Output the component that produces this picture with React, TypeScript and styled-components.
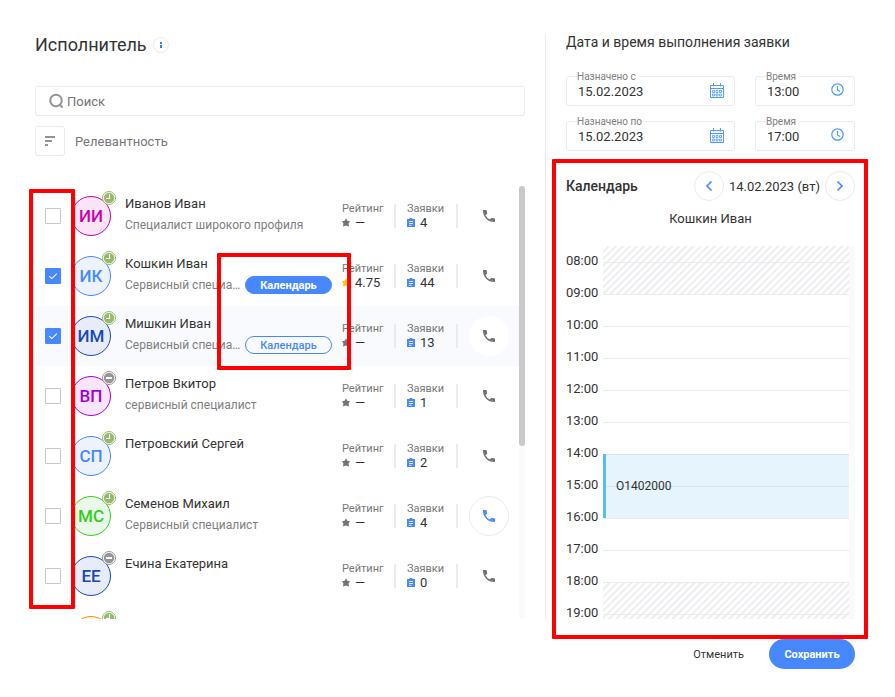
import React, { useState } from 'react';
import styled, { createGlobalStyle, css } from 'styled-components';

const blue = '#4788ff';
const line = '#ebebeb';
const red = '#ff0000';

const GlobalStyle = createGlobalStyle`
  *, *::before, *::after { box-sizing: border-box; }
  body {
    margin: 0;
    background: #fff;
    color: #333;
    font-family: Roboto, "Liberation Sans", sans-serif;
    font-size: 13px;
  }
  button, input { font: inherit; color: inherit; margin: 0; padding: 0; border: 0; background: none; }
  button { cursor: pointer; }
  h1, h2, h3, p, ul { margin: 0; padding: 0; }
  ul { list-style: none; }
  svg { display: block; flex: none; }
`;

const Page = styled.main`
  padding: 33px 40px 28px 35px;
`;

const Columns = styled.div`
  display: grid;
  grid-template-columns: minmax(420px, 1fr) 310px;
  column-gap: 20px;
`;

const Performers = styled.section`
  display: flex;
  flex-direction: column;
`;

const TitleRow = styled.div`
  display: flex;
  align-items: center;
  gap: 6px;
  height: 24px;
  margin-bottom: 29px;
`;

const Title = styled.h1`
  font-size: 18px;
  font-weight: 400;
  line-height: 24px;
`;

const InfoButton = styled.button`
  display: grid;
  place-items: center;
  width: 16px;
  height: 16px;
  border: 1px solid ${line};
  border-radius: 50%;
`;

const SearchBox = styled.label`
  display: flex;
  align-items: center;
  gap: 3px;
  height: 30px;
  padding: 0 13px;
  border: 1px solid ${line};
  border-radius: 3px;
`;

const SearchInput = styled.input`
  flex: 1;
  min-width: 0;
  font-size: 13px;
  outline: none;
  &::placeholder { color: #757575; opacity: 1; }
`;

const SortRow = styled.div`
  display: flex;
  align-items: center;
  gap: 10px;
  margin: 10px 0 30px;
  color: #777;
`;

const SortButton = styled.button`
  display: grid;
  place-items: center;
  width: 30px;
  height: 30px;
  border: 1px solid ${line};
  border-radius: 3px;
`;

const ListArea = styled.div`
  position: relative;
  display: grid;
  grid-template-columns: minmax(0, 1fr) 6px;
`;

const List = styled.ul`
  max-height: 433px;
  overflow-y: auto;
  scrollbar-width: none;
`;

const Track = styled.div`
  background: #fafafa;
`;

const Thumb = styled.div`
  height: 60%;
  border-radius: 3px;
  background: #c9c9c9;
`;

const Row = styled.li<{ $active?: boolean }>`
  display: flex;
  align-items: center;
  height: 60px;
  padding: 0 10px;
  background: ${p => (p.$active ? '#f9fafd' : 'transparent')};
`;

const Check = styled.input`
  appearance: none;
  flex: none;
  width: 16px;
  height: 16px;
  border: 1px solid #c6c6c6;
  border-radius: 1px;
  background: #fff;
  &:checked {
    border-color: ${blue};
    background: ${blue} url("data:image/svg+xml,%3Csvg xmlns='http://www.w3.org/2000/svg' viewBox='0 0 14 14'%3E%3Cpath d='M3.3 7.2l2.5 2.4 5-5' fill='none' stroke='white' stroke-width='1.1'/%3E%3C/svg%3E") center / 14px no-repeat;
  }
`;

const EmptyCheck = styled.span`
  width: 16px;
`;

const Avatar = styled.div<{ $color: string; $fill: string }>`
  position: relative;
  display: grid;
  place-items: center;
  flex: none;
  width: 40px;
  height: 40px;
  margin: 0 14px 0 10px;
  border: 1px solid ${p => p.$color};
  border-radius: 50%;
  background: ${p => p.$fill};
  color: ${p => p.$color};
  font-size: 17px;
  font-weight: 500;
`;

const Badge = styled.span`
  position: absolute;
  top: -6px;
  right: -6px;
`;

const Person = styled.div`
  flex: 1;
  min-width: 0;
  height: 44px;
  margin-right: 10px;
`;

const Name = styled.h3`
  font-size: 13px;
  font-weight: 400;
  line-height: 20px;
  margin-bottom: 2px;
`;

const RoleLine = styled.div`
  display: flex;
  align-items: center;
  gap: 4px;
`;

const Role = styled.span`
  flex: 1;
  min-width: 0;
  overflow: hidden;
  color: #808080;
  font-size: 12px;
  line-height: 18px;
  white-space: nowrap;
  text-overflow: ellipsis;
`;

const Pill = styled.button<{ $filled?: boolean }>`
  flex: none;
  width: 87px;
  height: 18px;
  padding-top: 1px;
  border: 1px solid ${blue};
  border-radius: 9px;
  color: ${blue};
  font-size: 11px;
  font-weight: 500;
  line-height: 15px;
  ${p => p.$filled && css`
    background: ${blue};
    color: #fff;
    font-weight: 700;
  `}
`;

const Stat = styled.div<{ $width: number }>`
  flex: none;
  display: flex;
  justify-content: space-between;
  align-items: center;
  width: ${p => p.$width}px;
  margin-right: 11px;
  &::after {
    content: '';
    width: 2px;
    height: 24px;
    background: ${line};
  }
`;

const StatText = styled.div`
  padding-bottom: 2px;
`;

const StatLabel = styled.div`
  color: #777;
  font-size: 11px;
  line-height: 15px;
`;

const StatValue = styled.div`
  display: flex;
  align-items: center;
  gap: 5px;
  font-size: 13px;
  line-height: 13px;
`;

const PhoneButton = styled.button<{ $look?: 'plain' | 'ringed' }>`
  display: grid;
  place-items: center;
  flex: none;
  width: 40px;
  height: 40px;
  border-radius: 50%;
  background: #fff;
  color: #6f6f6f;
  ${p => p.$look === 'ringed' && css`
    border: 1px solid ${line};
    color: ${blue};
  `}
`;

const ChecksFrame = styled.div`
  position: absolute;
  top: 3px;
  bottom: 10px;
  left: -6px;
  width: 46px;
  border: 4px solid ${red};
  border-radius: 1px;
  pointer-events: none;
`;

const PillsFrame = styled.div`
  position: absolute;
  top: 67px;
  right: 174px;
  width: 134px;
  height: 117px;
  border: 4px solid ${red};
  border-radius: 1px;
  pointer-events: none;
`;

const Schedule = styled.section`
  padding-left: 20px;
  border-left: 1px solid ${line};
`;

const ScheduleTitle = styled.h2`
  font-size: 14px;
  font-weight: 400;
  line-height: 18px;
  margin-bottom: 18px;
`;

const FieldGrid = styled.div`
  display: grid;
  grid-template-columns: minmax(0, 1fr) 100px;
  gap: 8px 20px;
`;

const Field = styled.fieldset`
  min-width: 0;
  height: 37px;
  margin: 0;
  padding: 0 10px;
  border: 1px solid ${line};
  border-radius: 3px;
`;

const Legend = styled.legend`
  padding: 2px 3px 0 0;
  color: #808080;
  font-size: 10px;
  line-height: 12px;
`;

const FieldBody = styled.div`
  display: flex;
  align-items: flex-start;
  height: 20px;
  color: ${blue};
`;

const FieldInput = styled.input`
  flex: 1;
  width: 100%;
  min-width: 0;
  height: 16px;
  padding-left: 1px;
  color: #333;
  font-size: 13px;
  outline: none;
`;

const Calendar = styled.section`
  position: relative;
  margin-top: 20px;
`;

const CalendarHead = styled.div`
  display: flex;
  align-items: center;
  justify-content: space-between;
`;

const CalendarTitle = styled.h2`
  font-size: 14px;
  font-weight: 500;
`;

const DayNav = styled.div`
  display: flex;
  align-items: center;
  gap: 5px;
`;

const NavButton = styled.button`
  display: grid;
  place-items: center;
  width: 30px;
  height: 30px;
  border: 1px solid ${line};
  border-radius: 50%;
  color: ${blue};
`;

const CalendarName = styled.p`
  margin: 8px 0 18px;
  text-align: center;
  line-height: 19px;
`;

const DayView = styled.div`
  display: grid;
  grid-template-columns: 37px minmax(0, 1fr) 6px;
  height: 373px;
  overflow: hidden;
`;

const Hours = styled.div`
  display: grid;
  grid-auto-rows: 32px;
  line-height: 30px;
`;

const Slots = styled.div`
  display: grid;
  grid-template-columns: 100%;
  grid-template-rows: 16px repeat(12, 32px);
`;

const Hatch = styled.div<{ $rows: string }>`
  grid-column: 1;
  grid-row: ${p => p.$rows};
  background: repeating-linear-gradient(-45deg, #fff 0 2px, #f0f0f3 3px 5px);
`;

const Slot = styled.div<{ $row: number }>`
  grid-column: 1;
  grid-row: ${p => p.$row};
  border-top: 1px solid ${line};
`;

const Event = styled.button`
  grid-column: 1;
  grid-row: 8 / span 2;
  padding-left: 10px;
  border-left: 3px solid #5bbcf0;
  background: rgba(91, 188, 240, 0.16);
  font-size: 12px;
  text-align: left;
`;

const CalendarFrame = styled.div`
  position: absolute;
  inset: -12px -13px -20px -14px;
  border: 4px solid ${red};
  border-radius: 1px;
  pointer-events: none;
`;

const Footer = styled.footer`
  display: flex;
  justify-content: flex-end;
  align-items: center;
  gap: 25px;
  margin-top: 20px;
`;

const CancelButton = styled.button`
  font-size: 11px;
`;

const SaveButton = styled.button`
  width: 86px;
  height: 30px;
  border-radius: 15px;
  background: ${blue};
  color: #fff;
  font-size: 11px;
  font-weight: 700;
`;

const InfoIcon = () => (
  <svg width="4" height="8" viewBox="0 0 4 8" fill="#2f80ff">
    <path d="M1 1h2v2H1zM1 4h2v3H1z" />
  </svg>
);

const SearchIcon = () => (
  <svg width="15" height="16" viewBox="0 0 15 16" fill="none" stroke="#949494" strokeWidth="2">
    <circle cx="7" cy="7.500" r="5.800" />
    <path d="M10 11.200l3.700 3.300" />
  </svg>
);

const SortIcon = () => (
  <svg width="12" height="12" viewBox="0 0 12 12" fill="#949494">
    <path d="M1 1h10v2H1zM1 5h7v2H1zM1 9h3v2H1z" />
  </svg>
);

const StatusIcon = ({ away }: { away?: boolean }) => {
  const color = away ? '#969696' : '#96b96e';
  return (
    <svg width="14" height="14" viewBox="0 0 14 14" fill="none">
      <circle cx="7" cy="7" r="6.500" fill="#fff" stroke={color} />
      <circle cx="7" cy="7" r="5.200" fill={color} />
      <path d={away ? 'M4 7h6' : 'M7.500 3v4.500H4'} stroke="#fff" strokeWidth={away ? 2 : 1.200} />
    </svg>
  );
};

const StarIcon = ({ gold }: { gold?: boolean }) => (
  <svg width="8" height="9" viewBox="0 0 8 9" fill={gold ? '#ffc400' : '#757575'}>
    <path d="M4 .3l1.300 2.400L8 3.200 6.600 5.400 7 8.400 4 7.500 1 8.400l.4-3L0 3.200l2.700-.5z" />
  </svg>
);

const TaskIcon = () => (
  <svg width="8" height="9" viewBox="0 0 8 9">
    <path d="M0 1h2.500a1.500 1.500 0 013 0H8v8H0z" fill={blue} />
    <path d="M2 3.500h4M2 5.500h4M2 7.300h2.500" stroke="#fff" strokeWidth=".8" />
  </svg>
);

const PhoneIcon = () => (
  <svg width="16" height="16" viewBox="0 0 24 24" fill="currentColor">
    <path d="M6.540 5c.06.890.210 1.760.450 2.590l-1.200 1.200c-.410-1.200-.670-2.470-.760-3.790h1.510m9.860 12.020c.850.240 1.720.390 2.600.450v1.490c-1.320-.090-2.590-.350-3.800-.750l1.200-1.190M7.500 3H4c-.550 0-1 .450-1 1 0 9.390 7.610 17 17 17 .550 0 1-.450 1-1v-3.490c0-.550-.450-1-1-1-1.240 0-2.450-.200-3.570-.570a.840.840 0 00-.310-.050c-.260 0-.510.100-.710.290l-2.200 2.200a15.150 15.150 0 01-6.590-6.590l2.200-2.200c.280-.280.360-.670.250-1.020A11.360 11.360 0 018.500 4c0-.550-.450-1-1-1z" />
    <path d="M4 4h4l.6 4-2.600 2.500zM14 18l2-2 4 .6V20z" />
  </svg>
);

const CalendarIcon = () => (
  <svg width="14" height="15" viewBox="0 0 14 15" fill="none" stroke="#4f9bf5">
    <path d="M.5 2.500h13v12H.5zM.5 5.500h13M3.500 0v3.500M10.500 0v3.500" />
    <path d="M2.500 7.500h2v2h-2zM6 7.500h2v2H6zM9.500 7.500h2v2h-2zM2.500 11h2v2h-2zM6 11h2v2H6zM9.500 11h2v2h-2z" strokeWidth=".8" />
  </svg>
);

const ClockIcon = () => (
  <svg width="13" height="13" viewBox="0 0 13 13" fill="none" stroke="#4f9bf5" strokeWidth="1.200">
    <circle cx="6.500" cy="6.500" r="5.700" />
    <path d="M6.500 3v4l2.500 1.500" />
  </svg>
);

const Chevron = ({ next }: { next?: boolean }) => (
  <svg width="8" height="12" viewBox="0 0 8 12" fill="none" stroke="currentColor" strokeWidth="1.700">
    <path d={next ? 'M1.500 1.500L6 6l-4.500 4.500' : 'M6.500 1.500L2 6l4.500 4.500'} />
  </svg>
);

type Worker = {
  initials: string;
  name: string;
  role?: string;
  color: string;
  fill: string;
  away?: boolean;
  rating?: string;
  tasks: number;
  calendar?: 'filled' | 'outline';
  active?: boolean;
  ringed?: boolean;
};

const workers: Worker[] = [
  { initials: 'ИИ', name: 'Иванов Иван', role: 'Специалист широкого профиля', color: '#c800aa', fill: '#f9e5f6', tasks: 4 },
  { initials: 'ИК', name: 'Кошкин Иван', role: 'Сервисный специалист', color: '#4788ff', fill: '#ecf3ff', rating: '4.75', tasks: 44, calendar: 'filled' },
  { initials: 'ИМ', name: 'Мишкин Иван', role: 'Сервисный специалист', color: '#1747bd', fill: '#e7ecf8', tasks: 13, calendar: 'outline', active: true },
  { initials: 'ВП', name: 'Петров Вкитор', role: 'сервисный специалист', color: '#a300d9', fill: '#f6e5fb', away: true, tasks: 1 },
  { initials: 'СП', name: 'Петровский Сергей', color: '#4788ff', fill: '#ecf3ff', tasks: 2 },
  { initials: 'МС', name: 'Семенов Михаил', role: 'Сервисный специалист', color: '#36cc20', fill: '#eafae8', tasks: 4, ringed: true },
  { initials: 'ЕЕ', name: 'Ечина Екатерина', color: '#1747bd', fill: '#e7ecf8', away: true, tasks: 0 },
  { initials: '', name: '', color: '#ff8c00', fill: '#fff3e5', tasks: 0 },
];

const hours = Array.from({ length: 12 }, (_, i) => `${String(i + 8).padStart(2, '0')}:00`);

const WorkerRow = ({ worker, checked, onToggle }: { worker: Worker; checked: boolean; onToggle: () => void }) => (
  <Row $active={worker.active}>
    {worker.name ? (
      <Check type="checkbox" aria-label={worker.name} checked={checked} onChange={onToggle} />
    ) : (
      <EmptyCheck />
    )}
    <Avatar $color={worker.color} $fill={worker.fill}>
      {worker.initials}
      <Badge><StatusIcon away={worker.away} /></Badge>
    </Avatar>
    {worker.name && (
      <>
        <Person>
          <Name>{worker.name}</Name>
          <RoleLine>
            {worker.role && <Role>{worker.role}</Role>}
            {worker.calendar && <Pill $filled={worker.calendar === 'filled'}>Календарь</Pill>}
          </RoleLine>
        </Person>
        <Stat $width={54}>
          <StatText>
            <StatLabel>Рейтинг</StatLabel>
            <StatValue><StarIcon gold={!!worker.rating} />{worker.rating ?? '—'}</StatValue>
          </StatText>
        </Stat>
        <Stat $width={51}>
          <StatText>
            <StatLabel>Заявки</StatLabel>
            <StatValue><TaskIcon />{worker.tasks}</StatValue>
          </StatText>
        </Stat>
        <PhoneButton aria-label="Позвонить" $look={worker.ringed ? 'ringed' : 'plain'}><PhoneIcon /></PhoneButton>
      </>
    )}
  </Row>
);

const DateTimeField = ({ label, value, icon }: { label: string; value: string; icon: React.ReactNode }) => (
  <Field>
    <Legend>{label}</Legend>
    <FieldBody>
      <FieldInput aria-label={label} defaultValue={value} />
      {icon}
    </FieldBody>
  </Field>
);

export default function App() {
  const [selected, setSelected] = useState<number[]>([1, 2]);
  const toggle = (i: number) =>
    setSelected(s => (s.includes(i) ? s.filter(x => x !== i) : [...s, i]));

  return (
    <Page>
      <GlobalStyle />
      <Columns>
        <Performers>
          <TitleRow>
            <Title>Исполнитель</Title>
            <InfoButton aria-label="Информация"><InfoIcon /></InfoButton>
          </TitleRow>
          <SearchBox>
            <SearchIcon />
            <SearchInput placeholder="Поиск" aria-label="Поиск" />
          </SearchBox>
          <SortRow>
            <SortButton aria-label="Сортировка"><SortIcon /></SortButton>
            Релевантность
          </SortRow>
          <ListArea>
            <List>
              {workers.map((w, i) => (
                <WorkerRow key={i} worker={w} checked={selected.includes(i)} onToggle={() => toggle(i)} />
              ))}
            </List>
            <Track><Thumb /></Track>
            <ChecksFrame />
            <PillsFrame />
          </ListArea>
        </Performers>

        <Schedule>
          <ScheduleTitle>Дата и время выполнения заявки</ScheduleTitle>
          <FieldGrid>
            <DateTimeField label="Назначено с" value="15.02.2023" icon={<CalendarIcon />} />
            <DateTimeField label="Время" value="13:00" icon={<ClockIcon />} />
            <DateTimeField label="Назначено по" value="15.02.2023" icon={<CalendarIcon />} />
            <DateTimeField label="Время" value="17:00" icon={<ClockIcon />} />
          </FieldGrid>
          <Calendar>
            <CalendarHead>
              <CalendarTitle>Календарь</CalendarTitle>
              <DayNav>
                <NavButton aria-label="Предыдущий день"><Chevron /></NavButton>
                14.02.2023 (вт)
                <NavButton aria-label="Следующий день"><Chevron next /></NavButton>
              </DayNav>
            </CalendarHead>
            <CalendarName>Кошкин Иван</CalendarName>
            <DayView>
              <Hours>
                {hours.map(h => <span key={h}>{h}</span>)}
              </Hours>
              <Slots>
                <Hatch $rows="1 / 3" />
                <Hatch $rows="12 / 14" />
                {hours.map((h, i) => <Slot key={h} $row={i + 2} />)}
                <Event>O1402000</Event>
              </Slots>
              <Track />
            </DayView>
            <CalendarFrame />
          </Calendar>
        </Schedule>
      </Columns>
      <Footer>
        <CancelButton>Отменить</CancelButton>
        <SaveButton>Сохранить</SaveButton>
      </Footer>
    </Page>
  );
}
